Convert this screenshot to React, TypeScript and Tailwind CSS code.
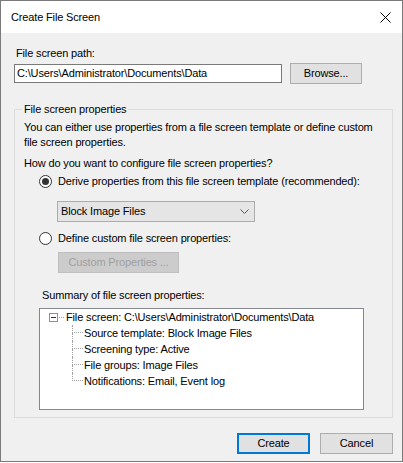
import React from 'react';

const font = { fontFamily: '"Liberation Sans", Arial, sans-serif' };

const Radio = ({ checked }: { checked?: boolean }) => (
  <span className="w-[13px] h-[13px] rounded-full border border-[#333333] bg-white flex items-center justify-center shrink-0">
    {checked && <span className="w-[7px] h-[7px] rounded-full bg-[#333333]" />}
  </span>
);

const TreeChild = ({ label, last }: { label: string; last?: boolean }) => (
  <div className="flex h-[16px] items-center">
    <div className="w-[11px] h-[16px] flex flex-col shrink-0">
      <div className="h-[8px] border-l border-b border-dotted border-[#a0a0a0]" />
      <div className={last ? 'h-[8px]' : 'h-[8px] border-l border-dotted border-[#a0a0a0]'} />
    </div>
    <span className="ml-[1px] whitespace-nowrap">{label}</span>
  </div>
);

export default function App() {
  return (
    <div
      className="w-[403px] h-[462px] flex flex-col border border-[#7a7a7a] bg-[#f0f0f0] text-[11px] leading-[15px] tracking-[-0.15px] text-black whitespace-nowrap"
      style={font}
    >
      {/* Title bar */}
      <div className="h-[32px] shrink-0 bg-white flex items-center justify-between pl-[10px] pr-[10px]">
        <span>Create File Screen</span>
        <svg width="11" height="11" viewBox="0 0 11 11" className="mr-[1px]">
          <path d="M0.5 0.5 L10.5 10.5 M10.5 0.5 L0.5 10.5" stroke="#000" strokeWidth="1" />
        </svg>
      </div>

      {/* Body */}
      <div className="flex-1 flex flex-col pl-[13px] pr-[9px]">
        <div className="mt-[13px] ml-[2px]">File screen path:</div>
        <div className="mt-[2px] flex items-center h-[21px]">
          <div className="w-[268px] h-[19px] border border-[#7a7a7a] bg-white flex items-center pl-[2px] overflow-hidden">
            C:\Users\Administrator\Documents\Data
          </div>
          <button className="ml-[8px] w-[72px] h-[21px] border border-[#adadad] bg-[#e1e1e1] flex items-center justify-center">
            Browse...
          </button>
        </div>

        {/* Group box */}
        <fieldset className="mt-[18px] w-[379px] border border-[#dcdcdc] px-0 pb-[7px]">
          <legend className="ml-[7px] px-[2px]">File screen properties</legend>
          <div className="mt-[3px] ml-[9px]">
            You can either use properties from a file screen template or define custom
            <br />
            file screen properties.
          </div>
          <div className="mt-[6px] ml-[9px]">How do you want to configure file screen properties?</div>
          <div className="mt-[2px] ml-[24px] h-[16px] flex items-center gap-[6px]">
            <Radio checked />
            <span>Derive properties from this file screen template (recommended):</span>
          </div>
          <div className="mt-[12px] ml-[42px] w-[198px] h-[21px] border border-[#acacac] bg-[#e5e5e5] flex items-center justify-between pl-[3px] pr-[5px]">
            <span>Block Image Files</span>
            <svg width="9" height="5" viewBox="0 0 9 5">
              <path d="M0.5 0.5 L4.5 4.5 L8.5 0.5" fill="none" stroke="#555" strokeWidth="1" />
            </svg>
          </div>
          <div className="mt-[8px] ml-[24px] h-[16px] flex items-center gap-[6px]">
            <Radio />
            <span>Define custom file screen properties:</span>
          </div>
          <button className="mt-[6px] ml-[43px] w-[121px] h-[21px] border border-[#bfbfbf] bg-[#cccccc] text-[#a0a0a0] flex items-center justify-center">
            Custom Properties ...
          </button>
          <div className="mt-[15px] ml-[27px]">Summary of file screen properties:</div>
          <div className="mt-[5px] ml-[24px] w-[325px] h-[102px] border border-[#828790] bg-white">
            <div className="flex h-[16px] items-center">
              <div className="ml-[9px] w-[9px] h-[9px] border border-[#919191] flex items-center justify-center shrink-0">
                <div className="w-[5px] h-[1px] bg-[#333333]" />
              </div>
              <div className="ml-[1px] w-[5px] border-b border-dotted border-[#a0a0a0]" />
              <span className="ml-[2px]">File screen: C:\Users\Administrator\Documents\Data</span>
            </div>
            <div className="ml-[32px]">
              <TreeChild label="Source template: Block Image Files" />
              <TreeChild label="Screening type: Active" />
              <TreeChild label="File groups: Image Files" />
              <TreeChild label="Notifications: Email, Event log" last />
            </div>
          </div>
        </fieldset>

        {/* Buttons */}
        <div className="mt-[15px] flex justify-end gap-[10px]">
          <button className="w-[73px] h-[21px] border-2 border-[#0078d7] bg-[#e1e1e1] flex items-center justify-center">
            Create
          </button>
          <button className="w-[73px] h-[21px] border border-[#adadad] bg-[#e1e1e1] flex items-center justify-center">
            Cancel
          </button>
        </div>
      </div>
    </div>
  );
}
